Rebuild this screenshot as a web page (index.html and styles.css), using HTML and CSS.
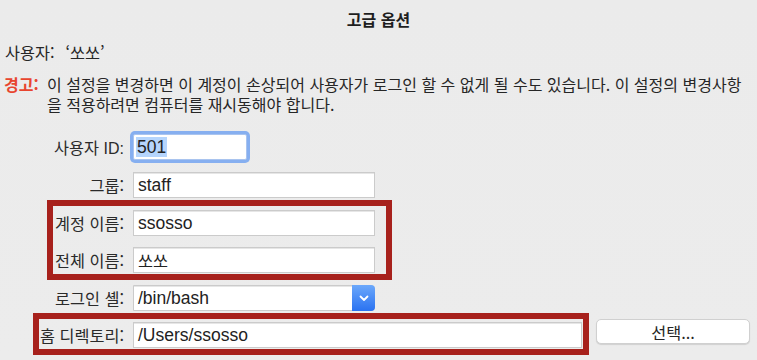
FILE: index.html
```html
<!DOCTYPE html>
<html lang="ko">
<head>
    <meta charset="UTF-8">
    <meta name="viewport" content="width=device-width, initial-scale=1.0">
    <title>고급 옵션</title>
    <link rel="stylesheet" href="styles.css">
</head>
<body>
<div class="dialog">
    <h1 class="title">고급 옵션</h1>

    <p class="user-line">사용자:<span class="user-name">‘쏘쏘’</span></p>

    <!-- Warning -->
    <div class="warning">
        <span class="warn-label">경고:</span>
        <p class="warn-text">이 설정을 변경하면 이 계정이 손상되어 사용자가 로그인 할 수 없게 될 수도 있습니다. 이 설정의 변경사항을 적용하려면 컴퓨터를 재시동해야 합니다.</p>
    </div>

    <!-- Fields -->
    <div class="form">
        <div class="row">
            <span class="label">사용자 <span class="latin">ID:</span></span>
            <div class="field field-id"><span class="selected">501</span></div>
        </div>

        <div class="row">
            <span class="label">그룹:</span>
            <div class="field">staff</div>
        </div>

        <div class="mark mark-names">
            <div class="row">
                <span class="label">계정 이름:</span>
                <div class="field">ssosso</div>
            </div>
            <div class="row">
                <span class="label">전체 이름:</span>
                <div class="field field-kr">쏘쏘</div>
            </div>
        </div>

        <div class="row row-shell">
            <span class="label">로그인 셸:</span>
            <div class="field select">
                /bin/bash
                <span class="select-btn">
                    <svg width="10" height="7" viewBox="0 0 10 7"><path d="M1.5 1.5 L5 5 L8.5 1.5" fill="none" stroke="#fff" stroke-width="1.8" stroke-linecap="round" stroke-linejoin="round"/></svg>
                </span>
            </div>
        </div>

        <div class="home-line">
            <div class="mark mark-home">
                <div class="row">
                    <span class="label">홈 디렉토리:</span>
                    <div class="field field-home">/Users/ssosso</div>
                </div>
            </div>
            <button class="choose-btn">선택...</button>
        </div>
    </div>
</div>
</body>
</html>
```

FILE: styles.css
```css
/* General */
body {
    margin: 0;
    background: linear-gradient(180deg, #ebebeb, #ececec);
    font-family: "Noto Sans CJK KR", "Liberation Sans", sans-serif;
    font-size: 16.3px;
    color: #262626;
}

.dialog {
    width: 757px;
    height: 360px;
    overflow: hidden;
}

.latin {
    font-family: "Liberation Sans", sans-serif;
    font-size: 16px;
}

/* Header */
.title {
    margin: 9px 0 0;
    font-size: 16px;
    line-height: 20px;
    font-weight: bold;
    text-align: center;
    color: #1e1e1e;
}

.user-line {
    margin: 13px 0 0;
    padding-left: 5px;
    line-height: 20px;
}

.user-name {
    margin-left: 11px;
}

/* Warning */
.warning {
    display: flex;
    margin-top: 12px;
    padding: 0 8px 0 4px;
    font-size: 16px;
    line-height: 20px;
}

.warn-label {
    flex: 0 0 43px;
    color: #e8452f;
    font-weight: bold;
}

.warn-text {
    margin: 0;
    flex: 1;
}

/* Form rows */
.form {
    margin-top: 20px;
    --inset: 0px;
}

.row {
    display: flex;
    align-items: center;
    gap: 9px;
    height: 26px;
    margin-bottom: 12px;
}

.label {
    width: calc(124px - var(--inset));
    text-align: right;
    white-space: nowrap;
    color: #2a2a2a;
}

.field {
    box-sizing: border-box;
    width: 242px;
    height: 26px;
    padding: 0 4px;
    background: #fff;
    border: 1px solid #cbcbcb;
    box-shadow: inset 0 1px 0 #e6e6e6;
    font-family: "Liberation Sans", "Noto Sans CJK KR", sans-serif;
    font-size: 17.5px;
    line-height: 24px;
    color: #222;
}

.field-kr {
    font-family: "Noto Sans CJK KR", sans-serif;
    font-size: 16.3px;
}

.field-id {
    width: 114px;
    border-color: #a9c4ef;
    border-radius: 2px;
    box-shadow: 0 0 0 3px #86aff0;
    padding-left: 2px;
}

.selected {
    background: #b5d5fd;
    padding: 0 1px;
}

/* Red highlight boxes */
.mark {
    border: 6px solid #a7211c;
    box-sizing: border-box;
}

.mark-names {
    --inset: 53px;
    width: 345px;
    margin: -10px 0 5px 47px;
    padding: 4px 0 1px;
}

.mark-names .row {
    margin-bottom: 11px;
}

.mark-names .row:last-child {
    margin-bottom: 0;
}

/* Select */
.row-shell {
    margin-bottom: 2px;
}

.select {
    position: relative;
    border-radius: 0 4px 4px 0;
}

.select-btn {
    position: absolute;
    top: -1px;
    right: -1px;
    width: 23px;
    height: 26px;
    border-radius: 0 4px 4px 0;
    background: linear-gradient(180deg, #6ba8fb, #2a72f1);
    display: flex;
    align-items: center;
    justify-content: center;
}

/* Home directory */
.home-line {
    display: flex;
    align-items: flex-start;
    gap: 7px;
}

.mark-home {
    --inset: 39px;
    margin-left: 33px;
    padding: 3px 1px 1px 0;
}

.mark-home .row {
    margin-bottom: 0;
}

.field-home {
    width: 449px;
}

.choose-btn {
    margin-top: 6px;
    width: 154px;
    height: 25px;
    background: #fff;
    border: 1px solid #d0d0d0;
    border-radius: 5px;
    box-shadow: 0 1px 1px rgba(0, 0, 0, 0.12);
    font-family: "Noto Sans CJK KR", sans-serif;
    font-size: 16.3px;
    color: #262626;
    padding: 0;
}
```
